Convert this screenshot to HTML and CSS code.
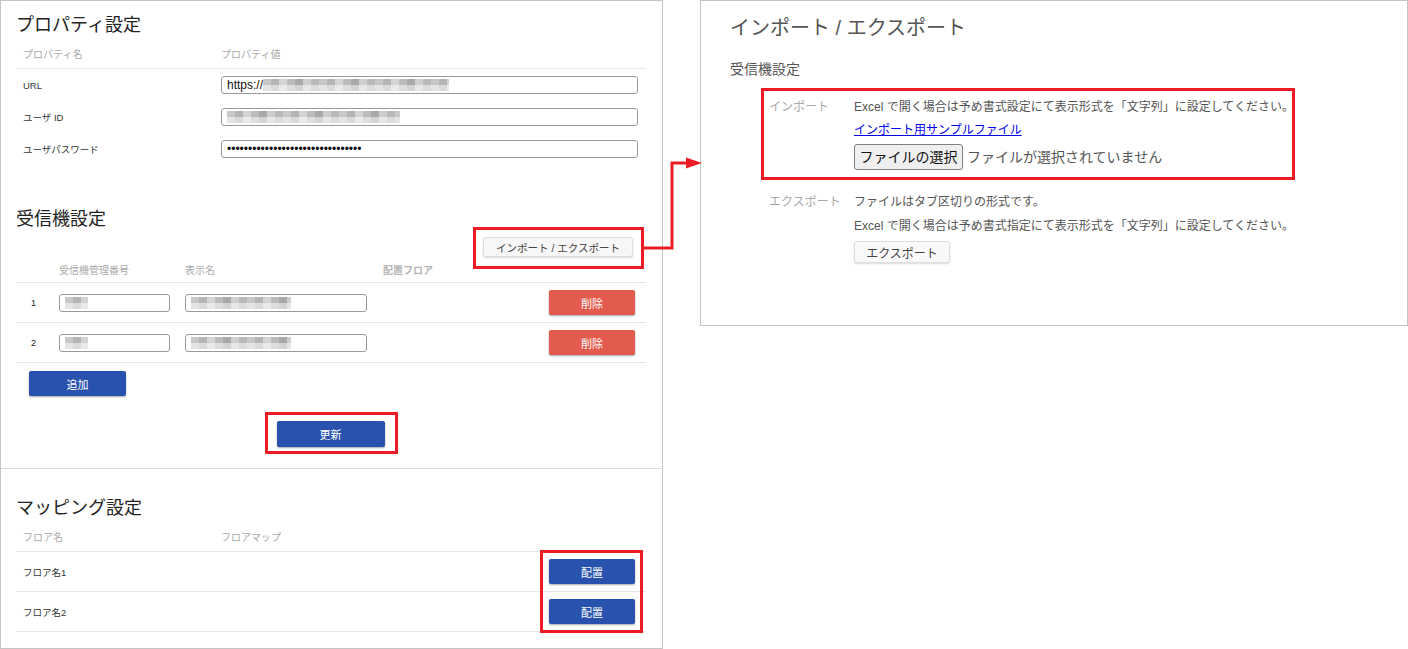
FILE: index.html
```html
<!DOCTYPE html>
<html lang="ja">
<head>
<meta charset="utf-8">
<title>設定</title>
<link rel="stylesheet" href="styles.css">
</head>
<body>
<div class="canvas">
  <div class="panel left">
    <section class="sec props">
      <h2 class="h">プロパティ設定</h2>
      <div class="ptable">
        <div class="prow phead"><div class="c1">プロパティ名</div><div>プロパティ値</div></div>
        <div class="prow"><div class="c1 lbl">URL</div><div class="field"><span class="ftext">https://</span><span class="mosaic m-url"></span></div></div>
        <div class="prow"><div class="c1 lbl">ユーザ ID</div><div class="field"><span class="mosaic m-id"></span></div></div>
        <div class="prow"><div class="c1 lbl">ユーザパスワード</div><div class="field"><span class="pw">••••••••••••••••••••••••••••••••</span></div></div>
      </div>
    </section>

    <section class="sec recv">
      <h2 class="h h2">受信機設定</h2>
      <div class="tools"><span class="hl"><button class="btn-light ie-btn">インポート / エクスポート</button></span></div>
      <div class="rtable">
        <div class="rrow rhead"><div></div><div>受信機管理番号</div><div>表示名</div><div class="bold">配置フロア</div><div></div></div>
        <div class="rrow">
          <div class="num">1</div>
          <div><div class="field f-no"><span class="mosaic m-no"></span></div></div>
          <div><div class="field f-name"><span class="mosaic m-name"></span></div></div>
          <div></div>
          <div class="act"><button class="btn red">削除</button></div>
        </div>
        <div class="rrow">
          <div class="num">2</div>
          <div><div class="field f-no"><span class="mosaic m-no2"></span></div></div>
          <div><div class="field f-name"><span class="mosaic m-name"></span></div></div>
          <div></div>
          <div class="act"><button class="btn red">削除</button></div>
        </div>
      </div>
      <button class="btn blue add">追加</button>
      <div class="update-wrap"><div class="redbox"><button class="btn blue update">更新</button></div></div>
    </section>

    <section class="sec mapping">
      <h2 class="h h3">マッピング設定</h2>
      <div class="mtable">
        <div class="mrow mhead"><div class="c1">フロア名</div><div>フロアマップ</div><div></div></div>
        <div class="mrow"><div class="c1 lbl">フロア名1</div><div></div><div class="act"><button class="btn blue">配置</button></div></div>
        <div class="mrow"><div class="c1 lbl">フロア名2</div><div></div><div class="act"><button class="btn blue">配置</button></div></div>
      </div>
    </section>
    <div class="mark-place"></div>
  </div>

  <div class="panel right">
    <h1 class="title">インポート / エクスポート</h1>
    <h3 class="sub">受信機設定</h3>
    <div class="ie">
      <div class="ierow import">
        <div class="ilabel">インポート</div>
        <div class="ibody">
          <p class="line">Excel で開く場合は予め書式設定にて表示形式を「文字列」に設定してください。</p>
          <p class="line link-line"><a class="link" href="#">インポート用サンプルファイル</a></p>
          <div class="file"><span class="filebtn">ファイルの選択</span><span class="filetxt">ファイルが選択されていません</span></div>
        </div>
      </div>
      <div class="ierow export">
        <div class="ilabel">エクスポート</div>
        <div class="ibody">
          <p class="line">ファイルはタブ区切りの形式です。</p>
          <p class="line l2">Excel で開く場合は予め書式指定にて表示形式を「文字列」に設定してください。</p>
          <button class="btn-light exp">エクスポート</button>
        </div>
      </div>
    </div>
  </div>

  <svg class="arrow" width="1408" height="649" viewBox="0 0 1408 649">
    <path d="M643 248 H672 V163 H689" fill="none" stroke="#ed1c24" stroke-width="3"/>
    <polygon points="686,157.5 702,163 686,168.5" fill="#ed1c24"/>
  </svg>
</div>
</body>
</html>
```

FILE: styles.css
```css
* { box-sizing: border-box; }
html, body { margin: 0; padding: 0; background: #fff; }
body {
  font-family: "Liberation Sans", "Noto Sans CJK JP", sans-serif;
  color: #333;
}
.canvas {
  position: relative;
  display: flex;
  align-items: flex-start;
  gap: 37px;
  width: 1408px;
  height: 649px;
}
.panel {
  border: 1px solid #c4c4c4;
  background: #fff;
}
.left {
  position: relative;
  width: 663px;
  height: 649px;
}
.right {
  width: 708px;
  height: 326px;
  padding-left: 29px;
}

/* headings */
.h {
  margin: 12px 0 0;
  font-size: 18px;
  line-height: 24px;
  font-weight: normal;
  color: #222;
}
.sec { padding: 0 16px 0 15px; }
.recv .h2 { margin-top: 42px; }
.recv { padding-bottom: 14px; }
.mapping { border-top: 1px solid #dcdcdc; }
.mapping .h3 { margin-top: 27px; }

/* property table */
.prow {
  display: grid;
  grid-template-columns: 205px 1fr;
  align-items: center;
  height: 32px;
  padding-right: 8px;
}
.prow .c1 { padding-left: 7px; }
.phead {
  height: 32px;
  align-items: end;
  padding-bottom: 7px;
  border-bottom: 1px solid #e6e6e6;
  font-size: 10px;
  line-height: 13px;
  color: #a8a8a8;
}
.lbl { font-size: 9.5px; color: #333; }
.field {
  display: flex;
  align-items: center;
  height: 18px;
  border: 1px solid #9a9a9a;
  border-radius: 3px;
  background: #fff;
  padding-left: 5px;
}
.ftext { font-size: 12px; color: #111; }
.pw { font-size: 12px; line-height: 14px; color: #111; }

.mosaic {
  display: inline-block;
  height: 12px;
  background:
    linear-gradient(to bottom, rgba(255,255,255,0) 50%, rgba(255,255,255,.5) 50%),
    repeating-linear-gradient(90deg, #c8c8c8 0 8px, #b4b4b4 8px 16px, #d4d4d4 16px 24px, #bcbcbc 24px 32px, #a9a9a9 32px 40px, #cfcfcf 40px 48px, #b9b9b9 48px 56px);
}
.m-url { width: 186px; }
.m-id { width: 173px; }
.m-no { width: 23px; }
.m-no2 { width: 23px; }
.m-name { width: 100px; }

/* receivers */
.tools {
  display: flex;
  justify-content: flex-end;
  margin-top: 6px;
  padding-right: 13px;
}
.hl {
  position: relative;
  display: inline-flex;
}
.hl::after {
  content: "";
  position: absolute;
  top: -10px;
  right: -11px;
  bottom: -12px;
  left: -10px;
  border: 3px solid #ed1c24;
  pointer-events: none;
}
.btn-light {
  font-family: inherit;
  height: 20px;
  padding: 0 11px;
  font-size: 10.5px;
  color: #444;
  background: #f7f7f7;
  border: 1px solid #dedede;
  border-radius: 3px;
  box-shadow: 0 1px 2px rgba(0,0,0,.15);
}
.ie-btn {
  width: 150px;
  padding: 0;
}
.rrow {
  display: grid;
  grid-template-columns: 43px 126px 198px 1fr auto;
  align-items: center;
  height: 40px;
  border-bottom: 1px solid #e6e6e6;
}
.rhead {
  height: 26px;
  font-size: 10px;
  color: #a8a8a8;
}
.bold { font-weight: bold; color: #b4b4b4; }
.num { padding-left: 15px; font-size: 9px; color: #222; }
.f-no { width: 111px; }
.f-name { width: 182px; }
.act { padding-right: 11px; }

.btn {
  font-family: inherit;
  width: 86px;
  height: 25px;
  border: 0;
  border-radius: 2px;
  color: #fff;
  font-size: 11px;
  box-shadow: 0 1px 2px rgba(0,0,0,.35);
}
.red { background: #e35b4e; }
.blue { background: #2852ad; }
.add { display: block; margin: 8px 0 0 13px; width: 97px; }
.update-wrap { display: flex; justify-content: center; margin-top: 16px; }
.redbox {
  border: 3px solid #ed1c24;
  padding: 6px 10px 4px 9px;
}
.update { width: 108px; height: 26px; }

/* mapping */
.mrow {
  display: grid;
  grid-template-columns: 205px 1fr auto;
  align-items: center;
  height: 40px;
  border-bottom: 1px solid #e6e6e6;
}
.mrow .c1 { padding-left: 7px; }
.mhead {
  height: 32px;
  align-items: end;
  padding-bottom: 7px;
  font-size: 10px;
  line-height: 13px;
  color: #a8a8a8;
}
.mark-place {
  position: absolute;
  left: 539px;
  top: 549px;
  width: 103px;
  height: 83px;
  border: 3px solid #ed1c24;
}

/* right panel */
.title {
  margin: 13px 0 0;
  font-size: 20px;
  line-height: 28px;
  font-weight: normal;
  color: #555;
}
.sub {
  margin: 17px 0 0;
  font-size: 14px;
  line-height: 20px;
  font-weight: normal;
  color: #555;
}
.ie { margin: 9px 0 0 31px; }
.ierow {
  display: grid;
  grid-template-columns: 85px 1fr;
  font-size: 12px;
  line-height: 18px;
  color: #555;
}
.import {
  width: 534px;
  border: 3px solid #ed1c24;
  padding: 7px 0 7px 5px;
}
.export { padding-left: 8px; margin-top: 13px; }
.ilabel { color: #a9a9a9; }
.line { margin: 0; white-space: nowrap; }
.link-line { margin-top: 5px; }
.l2 { margin-top: 6px; }
.link { color: #0000ee; text-decoration: underline; }
.file { display: flex; align-items: center; margin-top: 5px; }
.filebtn {
  display: inline-flex;
  align-items: center;
  justify-content: center;
  width: 109px;
  height: 26px;
  font-size: 14px;
  color: #111;
  background: #efefef;
  border: 1px solid #808080;
  border-radius: 3px;
}
.filetxt { margin-left: 4px; font-size: 14px; color: #555; }
.exp {
  margin-top: 6px;
  width: 96px;
  height: 22px;
  padding: 0;
  font-size: 12px;
  background: #f9f9f9;
}

.arrow {
  position: absolute;
  left: 0;
  top: 0;
  pointer-events: none;
}
```
